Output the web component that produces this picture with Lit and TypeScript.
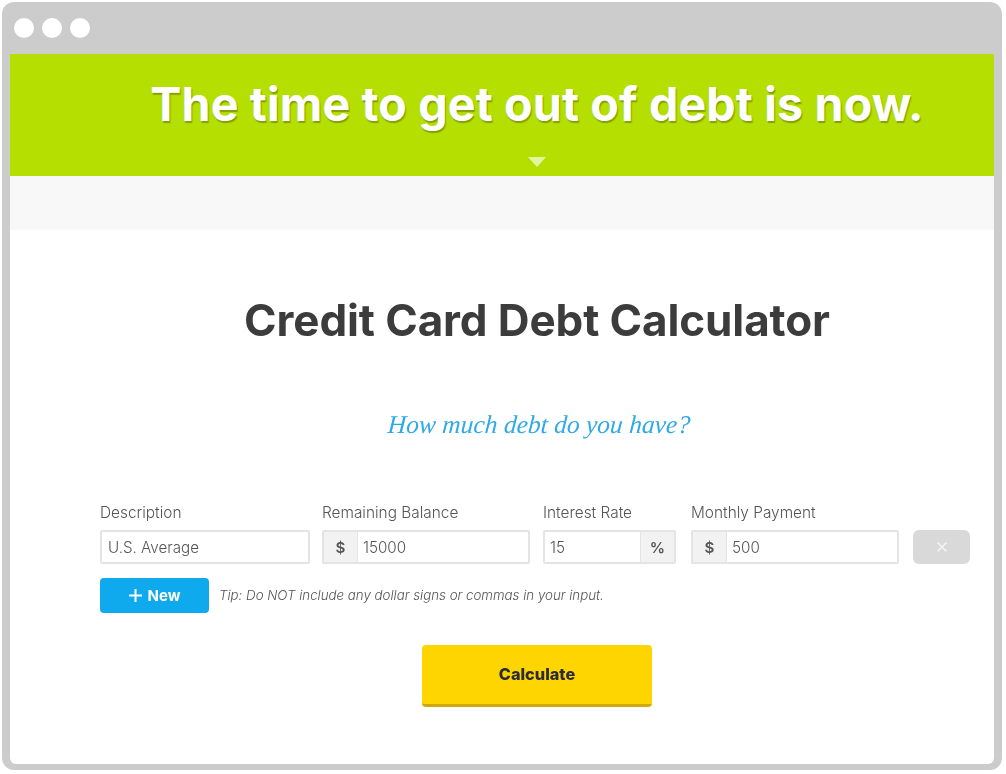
import { LitElement, html, css } from "lit";
import { customElement } from "lit/decorators.js";

@customElement("app-root")
export class AppRoot extends LitElement {
  static styles = css`
    :host { display: block; width: 1006px; height: 774px; background: #fff; padding: 2px 4px 4px 2px; box-sizing: border-box; font-family: "Inter", "Liberation Sans", sans-serif; color: #555; overflow: hidden; }
    .frame { height: 768px; background: #ccc; border-radius: 12px; padding: 0 8px 6px; box-sizing: border-box; display: flex; flex-direction: column; }
    .bar { height: 52px; flex: none; display: flex; align-items: center; gap: 8px; padding: 0 0 0 4px; }
    .dot { width: 20px; height: 20px; border-radius: 50%; background: #fff; }
    .page { flex: 1; background: #fff; display: flex; flex-direction: column; border-radius: 0 0 6px 6px; overflow: hidden; filter: blur(0.5px); }
    .hero { height: 122px; flex: none; background: #b5df00; display: flex; flex-direction: column; align-items: center; box-sizing: border-box; padding-top: 20px; }
    h1 { margin: 0 0 0 70px; color: #fff; font-size: 46.6px; line-height: 60px; font-weight: 700; letter-spacing: 0.15px; white-space: nowrap; text-shadow: 1px 2px 1px rgba(90,110,0,.55); }
    .arrow { width: 18px; height: 10px; margin: 23px 0 0 70px; }
    .strip { height: 54px; flex: none; background: #f8f8f8; }
    .main { flex: 1; display: flex; flex-direction: column; padding: 0 0 0 90px; }
    h2 { margin: 60px 0 0 0; width: 874px; text-align: center; font-size: 44px; line-height: 60px; font-weight: 700; color: #3c3c3c; white-space: nowrap; letter-spacing: -0.1px; }
    .hand { margin: 57px 0 0 0; width: 874px; text-align: center; font-family: "Liberation Serif", serif; font-style: italic; font-size: 25.5px; line-height: 36px; color: #2fa9e8; text-indent: 4px; white-space: nowrap; transform: skewX(-4deg); }
    .row { display: flex; margin-top: 60px; }
    .field { display: flex; flex-direction: column; }
    .f1 { width: 210px; margin-right: 12px; }
    .f2 { width: 208px; margin-right: 13px; }
    .f3 { width: 133px; margin-right: 15px; }
    .f4 { width: 208px; margin-right: 14px; }
    label { font-size: 15.4px; line-height: 20px; font-weight: 300; color: #555; height: 27px; white-space: nowrap; }
    .input { height: 34px; box-sizing: border-box; border: 2px solid #e4e4e4; border-radius: 2px; display: flex; align-items: stretch; font-size: 15.2px; font-weight: 300; color: #555; background: #fff; }
    .val { flex: 1; display: flex; align-items: center; padding-left: 5px; white-space: nowrap; }
    .f1 .val { padding-left: 6px; }
    .add { width: 34px; flex: none; box-sizing: border-box; background: #f2f2f2; display: flex; align-items: center; justify-content: center; font-weight: 600; color: #555; }
    .add.l { border-right: 1px solid #e4e4e4; }
    .add.r { border-left: 1px solid #e4e4e4; }
    .x { width: 57px; height: 34px; margin-top: 27px; border-radius: 6px; background: #d9d9d9; display: flex; align-items: center; justify-content: center; }
    .tools { display: flex; align-items: center; margin-top: 14px; gap: 10px; }
    .new { width: 109px; height: 35px; border-radius: 4px; background: #0fa9ee; color: #fff; font-weight: 700; font-size: 15px; display: flex; align-items: center; justify-content: center; gap: 6px; }
    .tip { font-size: 13.3px; font-style: italic; font-weight: 300; color: #555; white-space: nowrap; margin-bottom: 2px; }
    .calc { margin: 32px 0 0 322px; width: 230px; height: 62px; box-sizing: border-box; background: #ffd500; border-bottom: 3px solid #cfa80a; border-radius: 4px; padding-bottom: 2px; display: flex; align-items: center; justify-content: center; font-size: 16.3px; font-weight: 800; color: #2b2b3a; }
  `;

  render() {
    return html`
      <div class="frame">
        <div class="bar"><span class="dot"></span><span class="dot"></span><span class="dot"></span></div>
        <div class="page">
          <div class="hero">
            <h1>The time to get out of debt is now.</h1>
            <svg class="arrow" viewBox="0 0 18 10"><path d="M0 0H18L9 10Z" fill="#e4f3a0"/></svg>
          </div>
          <div class="strip"></div>
          <div class="main">
            <h2>Credit Card Debt Calculator</h2>
            <div class="hand">How much debt do you have?</div>
            <div class="row">
              <div class="field f1"><label>Description</label><div class="input"><span class="val">U.S. Average</span></div></div>
              <div class="field f2"><label>Remaining Balance</label><div class="input"><span class="add l">$</span><span class="val">15000</span></div></div>
              <div class="field f3"><label>Interest Rate</label><div class="input"><span class="val">15</span><span class="add r">%</span></div></div>
              <div class="field f4"><label>Monthly Payment</label><div class="input"><span class="add l">$</span><span class="val">500</span></div></div>
              <div class="x"><svg width="12" height="12" viewBox="0 0 12 12"><path d="M1.5 1.5L10.5 10.5M10.5 1.5L1.5 10.5" stroke="#f4f4f4" stroke-width="1.6" fill="none"/></svg></div>
            </div>
            <div class="tools">
              <div class="new"><svg width="13" height="13" viewBox="0 0 13 13"><path d="M6.5 0V13M0 6.5H13" stroke="#fff" stroke-width="2" fill="none"/></svg><span>New</span></div>
              <span class="tip">Tip: Do NOT include any dollar signs or commas in your input.</span>
            </div>
            <div class="calc">Calculate</div>
          </div>
        </div>
      </div>
    `;
  }
}
